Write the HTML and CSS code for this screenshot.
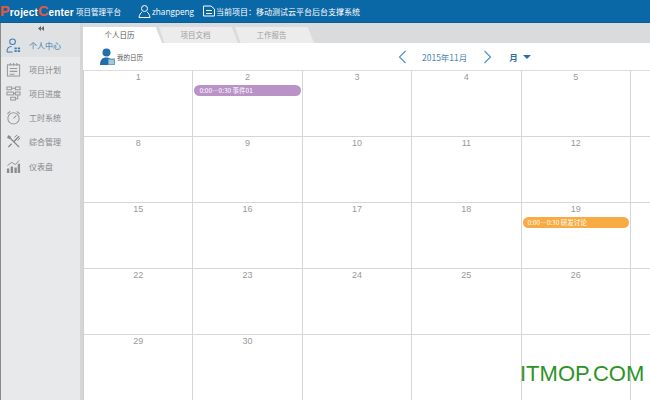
FILE: index.html
```html
<!DOCTYPE html>
<html lang="zh-CN">
<head>
    <meta charset="UTF-8">
    <title>ProjectCenter 项目管理平台</title>
    <link rel="stylesheet" href="styles.css">
</head>
<body>
    <header class="topbar">
        <div class="logo"><span class="logo-cap">P</span>roject<span class="logo-cap">C</span>enter</div>
        <div class="logo-sub">项目管理平台</div>
        <div class="user">
            <svg width="13" height="13" viewBox="0 0 13 13" fill="none" stroke="#fff" stroke-width="1"><circle cx="6.500" cy="3.500" r="3"/><path d="M4 7C2.500 8 1.500 9.500 1 12.500h11C11.500 9.500 10.500 8 9 7"/></svg>
            <span>zhangpeng</span>
        </div>
        <div class="project">
            <svg width="12" height="12" viewBox="0 0 12 12" fill="none" stroke="#fff" stroke-width="1"><path d="M.5 1h7.500l3.500 3v7H.5z"/><path d="M3 5.500h6M3 8.500h6"/></svg>
            <span>当前项目<span class="colon">：</span>移动测试云平台后台支撑系统</span>
        </div>
    </header>

    <div class="main">
        <aside class="sidebar">
            <div class="collapse">
                <svg width="6" height="5" viewBox="0 0 6 5" fill="#666"><path d="M3 0v5L0 2.500zM6 0v5L3 2.500z"/></svg>
            </div>
            <nav>
                <a class="nav-item active">
                    <svg width="15" height="15" viewBox="0 0 16 16" fill="none" stroke="#3d7db5" stroke-width="1.100"><circle cx="7" cy="4" r="3"/><path d="M1 15c0-4 2-6 5-6"/><path d="M1 15h6"/><path d="M9 10h2.500v2H9zM12.500 10H15v2h-2.500zM9 13h2.500v2H9zM12.500 13H15v2h-2.500z" fill="#3d7db5" stroke="none"/></svg>
                    <span>个人中心</span>
                </a>
                <a class="nav-item">
                    <svg width="15" height="15" viewBox="0 0 16 16" fill="none" stroke="#999" stroke-width="1.100"><rect x="1.500" y="3" width="13" height="12"/><path d="M4.500 1v3M8 1v3M11.500 1v3M4 7h8M4 10h8M4 13h5"/></svg>
                    <span>项目计划</span>
                </a>
                <a class="nav-item">
                    <svg width="15" height="15" viewBox="0 0 16 16" fill="none" stroke="#999" stroke-width="1.100"><rect x="1" y="1" width="5" height="3"/><rect x="10" y="1" width="5" height="3"/><rect x="1" y="6.500" width="7" height="3"/><rect x="10" y="6.500" width="5" height="3"/><rect x="5" y="12" width="5" height="3"/><path d="M6 2.500h4M8 8h2M10 13.500h2.500v-4"/></svg>
                    <span>项目进度</span>
                </a>
                <a class="nav-item">
                    <svg width="15" height="15" viewBox="0 0 16 16" fill="none" stroke="#999" stroke-width="1.100"><circle cx="8" cy="9" r="6"/><path d="M8 9l3-3M1.500 4l3-2.500M14.500 4l-3-2.500"/></svg>
                    <span>工时系统</span>
                </a>
                <a class="nav-item">
                    <svg width="15" height="15" viewBox="0 0 16 16" fill="none" stroke="#888" stroke-width="1.500"><path d="M3 3l11 11"/><path d="M1.500 4l1-2.500L5 3 4 5z" fill="#888" stroke-width=".6"/><path d="M14 2.500L8.500 8M6 10.500L2.500 14"/><path d="M9 3.500l3-2.500M12.500 7l2.500-3" stroke-width="1"/></svg>
                    <span>综合管理</span>
                </a>
                <a class="nav-item">
                    <svg width="15" height="15" viewBox="0 0 16 16" fill="#8c8c8c"><path d="M1 10h2.500v5H1zM5 8h2.500v7H5zM9 9h2.500v6H9zM12.500 5H15v10h-2.500z"/><path d="M1.500 7L6 3.500 10 6l4-4.500" fill="none" stroke="#8c8c8c"/></svg>
                    <span>仪表盘</span>
                </a>
            </nav>
        </aside>
        <div class="splitter"></div>

        <section class="content">
            <div class="tabs">
                <div class="tab active">个人日历</div>
                <div class="tab">项目文档</div>
                <div class="tab">工作报告</div>
            </div>

            <div class="toolbar">
                <div class="my-cal">
                    <svg width="15" height="17" viewBox="0 0 15 17"><circle cx="6.500" cy="4.500" r="4" fill="#1f6fa8"/><path d="M0 17c0-5 2-7.500 6.500-7.500 1.500 0 2.500.3 3.500.8V17z" fill="#1f6fa8"/><rect x="8" y="10.500" width="7" height="6.500" fill="#6b9fc4"/><path d="M9 13h5M9 15h5" stroke="#fff" stroke-width=".8"/></svg>
                    <span>我的日历</span>
                </div>
                <div class="month-nav">
                    <svg width="9" height="14" viewBox="0 0 9 14" fill="none" stroke="#4f8fbd" stroke-width="1.100"><path d="M7.500 1L1.500 7l6 6"/></svg>
                    <span class="month-label">2015年11月</span>
                    <svg width="9" height="14" viewBox="0 0 9 14" fill="none" stroke="#4f8fbd" stroke-width="1.100"><path d="M1.500 1l6 6-6 6"/></svg>
                    <span class="view-label">月</span>
                    <span class="caret"></span>
                </div>
            </div>

            <div class="calendar">
                <div class="day">1</div>
                <div class="day">2<div class="event purple">0:00—0:30 事件01</div></div>
                <div class="day">3</div>
                <div class="day">4</div>
                <div class="day">5</div>
                <div class="day"></div>
                <div class="day">8</div>
                <div class="day">9</div>
                <div class="day">10</div>
                <div class="day">11</div>
                <div class="day">12</div>
                <div class="day"></div>
                <div class="day">15</div>
                <div class="day">16</div>
                <div class="day">17</div>
                <div class="day">18</div>
                <div class="day">19<div class="event orange">0:00—0:30 研发讨论</div></div>
                <div class="day"></div>
                <div class="day">22</div>
                <div class="day">23</div>
                <div class="day">24</div>
                <div class="day">25</div>
                <div class="day">26</div>
                <div class="day"></div>
                <div class="day">29</div>
                <div class="day">30</div>
                <div class="day"></div>
                <div class="day"></div>
                <div class="day"></div>
                <div class="day"></div>
            </div>
        </section>
    </div>

    <div class="watermark">ITMOP.COM</div>
</body>
</html>
```

FILE: styles.css
```css
body {
    font-family: "Noto Sans CJK SC", "Liberation Sans", sans-serif;
    margin: 0;
    width: 650px;
    height: 400px;
    overflow: hidden;
    background-color: #fff;
}
.topbar {
    display: flex;
    align-items: center;
    height: 22px;
    background-color: #0b68a6;
    color: #fff;
    border-bottom: 1px solid #0a5d96;
}
.logo {
    font-family: "Liberation Sans", sans-serif;
    font-weight: bold;
    font-size: 10px;
    width: 76px;
    white-space: nowrap;
    letter-spacing: 0.150px;
}
.logo-cap {
    color: #e2583e;
    font-size: 14.500px;
}
.logo-sub {
    font-size: 7.500px;
    width: 62px;
    white-space: nowrap;
}
.user {
    display: flex;
    align-items: center;
    gap: 1px;
    width: 65px;
    font-family: "Open Sans", sans-serif;
    font-size: 8.200px;
}
.project {
    display: flex;
    align-items: center;
    gap: 1px;
    font-size: 8px;
    white-space: nowrap;
}
.colon {
    font-family: "Noto Sans CJK TC", sans-serif;
}
.main {
    display: flex;
    height: 377px;
}
.sidebar {
    width: 79px;
    background-color: #e8e9eb;
    border-left: 1px solid #8a8a8a;
}
.collapse {
    display: flex;
    justify-content: center;
    align-items: center;
    height: 10px;
    background-color: #dfe1e3;
}
.nav-item {
    display: flex;
    align-items: center;
    gap: 8px;
    height: 24.200px;
    padding-left: 5px;
    font-size: 8px;
    color: #888;
}
.nav-item.active {
    background-color: #dfe1e3;
    color: #3d7db5;
}
.splitter {
    width: 3px;
    background-color: #d3d5d7;
}
.content {
    flex: 1;
    min-width: 0;
}
.tabs {
    display: flex;
    align-items: flex-end;
    height: 20px;
    background-color: #d9dbdc;
}
.tab {
    width: 73px;
    height: 16px;
    line-height: 16px;
    margin-right: -3px;
    padding-right: 6px;
    text-align: center;
    font-size: 7.500px;
    color: #a0a0a0;
    background-color: #ececec;
    clip-path: polygon(0 0, 92% 0, 100% 100%, 7% 100%);
}
.tab.active {
    color: #555;
    background-color: #fff;
    clip-path: polygon(0 0, 92% 0, 100% 100%, 0 100%);
}
.toolbar {
    display: flex;
    align-items: center;
    height: 27px;
    padding-left: 17px;
}
.my-cal {
    display: flex;
    align-items: center;
    gap: 2px;
    width: 298px;
    font-size: 6.500px;
    color: #555;
}
.month-nav {
    display: flex;
    align-items: center;
    font-size: 8.500px;
    color: #4a86b0;
}
.month-label {
    margin: 0 16px 0 15px;
}
.view-label {
    margin-left: 17px;
    font-weight: bold;
    color: #2a6f9f;
}
.caret {
    margin-left: 5px;
    border-left: 4px solid transparent;
    border-right: 4px solid transparent;
    border-top: 4px solid #2a6f9f;
}
.calendar {
    display: grid;
    grid-template-columns: repeat(5, 109.400px) 1fr;
    grid-auto-rows: 66px;
    border-top: 1px solid #dcdcdc;
    border-left: 1px solid #d0d0d0;
}
.day {
    box-sizing: border-box;
    padding: 1px 1px 0 1px;
    border-right: 1px solid #d6d6d6;
    border-bottom: 1px solid #d6d6d6;
    text-align: center;
    font-family: "Liberation Sans", sans-serif;
    font-size: 9px;
    line-height: 10px;
    color: #999;
}
.day:nth-child(6n) {
    border-right: none;
}
.event {
    height: 11px;
    line-height: 11px;
    margin-top: 3px;
    padding-left: 5px;
    border-radius: 6px;
    text-align: left;
    font-family: "Noto Sans CJK SC", sans-serif;
    font-size: 6.500px;
    color: #fff;
    white-space: nowrap;
}
.purple {
    background-color: #b993c7;
}
.orange {
    background-color: #f7ab42;
}
.watermark {
    position: absolute;
    left: 520px;
    top: 361px;
    font-family: "Liberation Sans", sans-serif;
    font-size: 22px;
    line-height: 26px;
    color: #2c9427;
}
```
